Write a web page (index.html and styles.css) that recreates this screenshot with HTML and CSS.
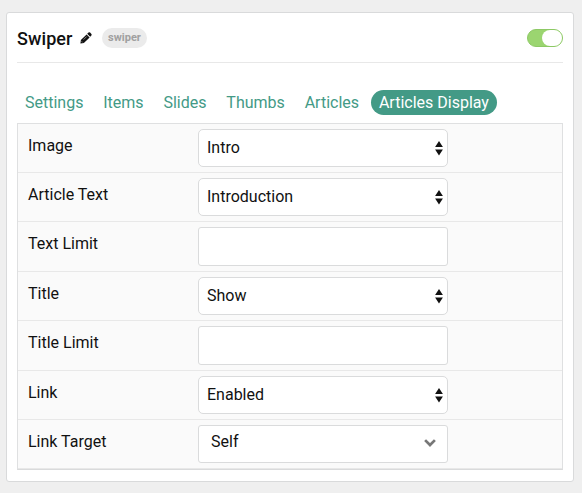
FILE: index.html
```html
<!DOCTYPE html>
<html lang="en">
<head>
<meta charset="utf-8">
<title>Swiper</title>
<link rel="stylesheet" href="styles.css">
</head>
<body>
<main class="card">
  <header class="head">
    <h1 class="title">Swiper</h1>
    <svg class="pencil" viewBox="0 0 12 12"><path fill="#111" d="M.4 11.6.9 8.1 6.6 2.4 9.6 5.4 3.9 11.1zM7.2 1.8 8.5.6Q9.3 0 10.1.6L11.4 1.9Q12 2.7 11.4 3.5L10.2 4.8z"/><path d="M1.6 9.3 2.7 10.4M3.6 7.6 6.7 4.5" stroke="#fff" stroke-width=".5"/></svg>
    <span class="badge">swiper</span>
    <span class="toggle"></span>
  </header>
  <nav class="tabs">
    <a class="tab">Settings</a><a class="tab">Items</a><a class="tab">Slides</a><a class="tab">Thumbs</a><a class="tab">Articles</a><a class="tab active">Articles Display</a>
  </nav>
  <section class="fields">
    <div class="row"><label class="label">Image</label><div class="select">Intro<svg class="arrows" viewBox="0 0 8 14"><path d="M4 0 7.9 6H.1zM.1 8.5h7.8L4 14.5z"/></svg></div></div>
    <div class="row"><label class="label">Article Text</label><div class="select">Introduction<svg class="arrows" viewBox="0 0 8 14"><path d="M4 0 7.9 6H.1zM.1 8.5h7.8L4 14.5z"/></svg></div></div>
    <div class="row"><label class="label">Text Limit</label><div class="input"></div></div>
    <div class="row"><label class="label">Title</label><div class="select">Show<svg class="arrows" viewBox="0 0 8 14"><path d="M4 0 7.9 6H.1zM.1 8.5h7.8L4 14.5z"/></svg></div></div>
    <div class="row"><label class="label">Title Limit</label><div class="input"></div></div>
    <div class="row"><label class="label">Link</label><div class="select">Enabled<svg class="arrows" viewBox="0 0 8 14"><path d="M4 0 7.9 6H.1zM.1 8.5h7.8L4 14.5z"/></svg></div></div>
    <div class="row"><label class="label">Link Target</label><div class="select combo">Self<svg class="chevron" viewBox="0 0 12 8"><path d="M1.1 1.1 6 6 10.9 1.1" fill="none" stroke="#777" stroke-width="2.7"/></svg></div></div>
  </section>
</main>
</body>
</html>
```

FILE: styles.css
```css
* { box-sizing: border-box; }
body {
  margin: 0;
  padding: 12px 8px 11px 6px;
  background: #efefef;
  color: #111;
  font: 16px/24px Roboto, sans-serif;
}
.card {
  height: 470px;
  padding: 0 10px;
  border: 1px solid #d9dadb;
  border-radius: 3px;
  background: #fff;
}
.head {
  display: flex;
  align-items: center;
  height: 50px;
  border-bottom: 1px solid #e8e8e8;
}
.title {
  width: 56px;
  margin: 2px 0 0;
  font-size: 18px;
  font-weight: 500;
  letter-spacing: 0.1px;
}
.pencil { width: 12px; height: 12px; margin: 1px 0 0 6.5px; }
.badge {
  width: 45px;
  height: 20px;
  margin-left: 10.5px;
  border-radius: 10px;
  background: #ebebeb;
  color: #a0a0a0;
  font-size: 11px;
  font-weight: 700;
  line-height: 19px;
  text-align: center;
}
.toggle {
  display: flex;
  justify-content: flex-end;
  width: 36px;
  height: 18px;
  margin-left: auto;
  border: 1px solid #8dc965;
  border-radius: 9px;
  background: #9bd570;
}
.toggle::after {
  content: "";
  width: 20px;
  height: 16px;
  border-radius: 8px;
  background: #fff;
}
.tabs { display: flex; gap: 3.85px; padding-top: 27px; height: 60px; }
.tab {
  height: 25px;
  padding: 0 8px;
  border-radius: 12.5px;
  color: #439a86;
  line-height: 25px;
  white-space: nowrap;
}
.active { background: #439a86; color: #fff; }
.fields { border: 1px solid #dfe0e1; border-bottom-color: #d9dadb; background: #fafafa; }
.row {
  display: flex;
  padding: 5px 0 5px 10px;
  border-bottom: 1px solid #e8e8e8;
}
.label { width: 170px; padding-top: 5px; }
.select, .input {
  display: flex;
  align-items: center;
  justify-content: space-between;
  width: 250px;
  height: 38px;
  padding: 0 4px 0 8px;
  border: 1px solid #dadbdc;
  border-radius: 5px;
  background: #fff;
}
.input { height: 39px; border-radius: 3px; }
.arrows { width: 8px; height: 14px; fill: #111; overflow: visible; }
.combo { padding: 0 11px 4px 12px; border-radius: 3px; }
.chevron { width: 12px; height: 8px; margin-top: 2px; }
```
